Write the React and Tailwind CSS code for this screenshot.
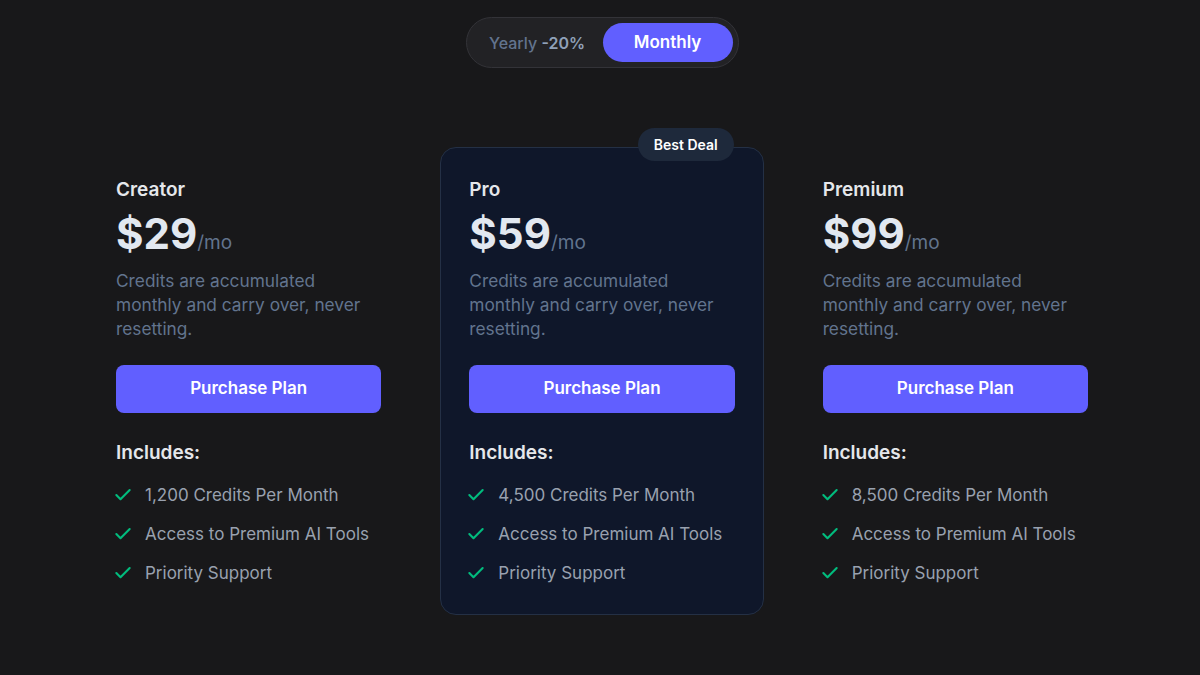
import { Check } from 'lucide-react'

const plans = [
  { name: 'Creator', price: 29, credits: '1,200' },
  { name: 'Pro', price: 59, credits: '4,500', featured: true },
  { name: 'Premium', price: 99, credits: '8,500' },
]

const PlanCard = ({ plan }) => {
  const features = [
    `${plan.credits} Credits Per Month`,
    'Access to Premium AI Tools',
    'Priority Support',
  ]

  return (
    <div
      className={`relative rounded-2xl ${
        plan.featured
          ? 'border border-[#243045] bg-[#0f172a] px-7 pt-7 pb-[29px]'
          : 'px-[29px] pt-[29px] pb-[29px]'
      }`}
    >
      {plan.featured && (
        <span className="absolute -top-5 right-[29px] flex h-[33px] items-center rounded-full bg-[#1e293b] px-4 text-[14px] font-semibold text-white">
          Best Deal
        </span>
      )}
      <h3 className="text-[19px] leading-7 font-semibold text-gray-200">{plan.name}</h3>
      <div className="mt-[9px] text-[42px] leading-none font-bold text-slate-200">
        ${plan.price}
        <span className="text-[19px] font-normal text-slate-500">/mo</span>
      </div>
      <p className="mt-[14px] max-w-[250px] text-[17.3px] leading-6 text-slate-500">
        Credits are accumulated monthly and carry over, never resetting.
      </p>
      <button className="mt-6 h-12 w-full rounded-lg bg-indigo-500 text-[17px] font-semibold text-white">
        Purchase Plan
      </button>
      <h4 className="mt-[26px] text-[19px] leading-7 font-semibold text-gray-200">Includes:</h4>
      <ul className="mt-4 flex flex-col gap-[15px]">
        {features.map((f) => (
          <li key={f} className="flex items-center gap-3 text-[17px] leading-6 text-gray-400">
            <Check className="-ml-[3px] h-5 w-5 text-emerald-500" strokeWidth={2.5} />
            {f}
          </li>
        ))}
      </ul>
    </div>
  )
}

const App = () => {
  return (
    <div
      className="min-h-[675px] bg-[#18181a] pt-[17px] pl-[4px]"
      style={{ fontFamily: 'Inter, "Noto Sans", sans-serif' }}
    >
      <div className="flex justify-center">
        <div className="flex items-center rounded-full border border-[#333338] bg-[#222225] p-[5px]">
          <button className="h-[39px] w-[131px] rounded-full text-[16px] font-medium text-slate-500">
            Yearly <span className="font-semibold text-slate-400">-20%</span>
          </button>
          <button className="h-[39px] w-[130px] rounded-full bg-indigo-500 text-[17px] font-semibold text-white">
            Monthly
          </button>
        </div>
      </div>

      <div className="mx-auto mt-[79px] grid w-[1030px] grid-cols-3 gap-[30px]">
        {plans.map((p) => (
          <PlanCard key={p.name} plan={p} />
        ))}
      </div>
    </div>
  )
}

export default App
